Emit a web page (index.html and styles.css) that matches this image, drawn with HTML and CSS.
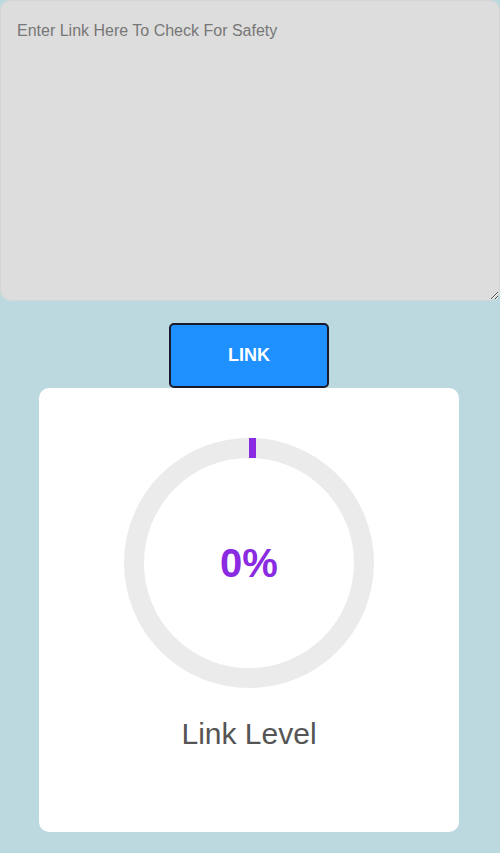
FILE: index.html
```html
<!DOCTYPE html>
<html>
<head>
<meta charset="utf-8">
<link rel="stylesheet" href="styles.css">
</head>
<body>
<div class="page">
  <textarea class="link-input" placeholder="Enter Link Here To Check For Safety"></textarea>
  <button class="link-btn">LINK</button>
  <div class="card">
    <div class="ring">
      <svg width="250" height="250" viewBox="0 0 250 250">
        <circle cx="125" cy="125" r="115" fill="none" stroke="#ebebeb" stroke-width="20"/>
        <rect x="125" y="0" width="7" height="20" fill="#8a2be2"/>
      </svg>
      <div class="percent">0%</div>
    </div>
    <div class="label">Link Level</div>
  </div>
</div>
</body>
</html>
```
FILE: styles.css
```css
html, body {
  margin: 0;
  padding: 0;
  background: #bdd9e0;
  font-family: "Liberation Sans", Arial, sans-serif;
}
.page {
  display: flex;
  flex-direction: column;
  align-items: center;
  padding-right: 2px;
  min-height: 853px;
}
.link-input {
  box-sizing: border-box;
  align-self: flex-start;
  width: 500px;
  height: 301px;
  margin: 0;
  padding: 21px 16px;
  border: 1px solid #d2d6d6;
  border-radius: 10px;
  background: #dddddd;
  font-family: "Liberation Sans", Arial, sans-serif;
  font-size: 16px;
  color: #333;
  display: block;
}
.link-input::placeholder {
  color: #777;
}
.link-btn {
  box-sizing: border-box;
  margin-top: 22px;
  width: 160px;
  height: 65px;
  background: #1e90ff;
  border: 2px solid #1a1a2a;
  border-radius: 5px;
  color: #fff;
  font-family: "Liberation Sans", Arial, sans-serif;
  font-weight: bold;
  font-size: 18px;
  display: flex;
  align-items: center;
  justify-content: center;
}
.card {
  box-sizing: border-box;
  width: 420px;
  height: 444px;
  margin-top: 0;
  background: #fff;
  border-radius: 10px;
  padding-top: 50px;
  display: flex;
  flex-direction: column;
  align-items: center;
}
.ring {
  position: relative;
  width: 250px;
  height: 250px;
}
.ring svg {
  display: block;
}
.percent {
  position: absolute;
  inset: 0;
  display: flex;
  align-items: center;
  justify-content: center;
  color: #8a2be2;
  font-weight: bold;
  font-size: 40px;
}
.label {
  margin-top: 29px;
  font-size: 30px;
  color: #555;
}
```
